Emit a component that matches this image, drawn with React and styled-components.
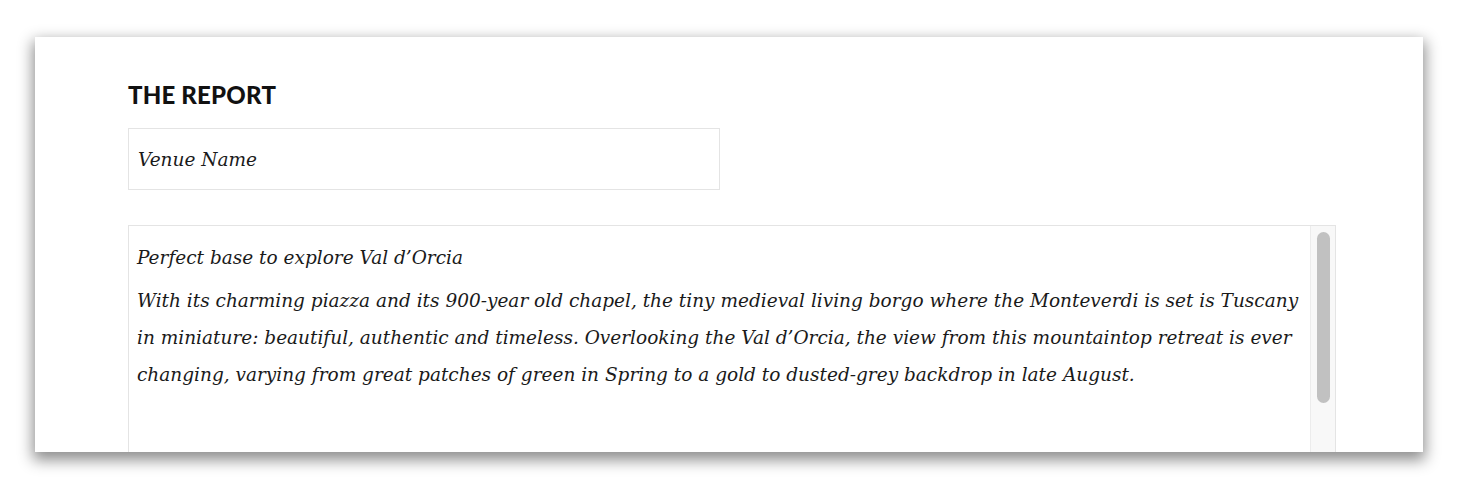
import React from "react";
import styled, { createGlobalStyle } from "styled-components";

const GlobalStyle = createGlobalStyle`
  html, body {
    margin: 0;
    padding: 0;
    background: #fff;
  }
  body {
    font-family: "Lato", "Noto Sans", sans-serif;
  }
`;

const Page = styled.div`
  padding: 37px 37px 0 35px;
  height: 490px;
  box-sizing: border-box;
  overflow: hidden;
`;

const Card = styled.section`
  background: #fff;
  height: 415px;
  box-sizing: border-box;
  padding: 0 87px 0 93px;
  overflow: hidden;
  box-shadow: 0 6px 14px 2px rgba(0, 0, 0, 0.45);
`;

const Heading = styled.h2`
  margin: 0;
  padding-top: 40px;
  font-family: "Lato", sans-serif;
  font-weight: 900;
  font-size: 24px;
  line-height: 36px;
  letter-spacing: 0.2px;
  color: #111;
  text-transform: uppercase;
`;

const VenueInput = styled.input`
  display: block;
  margin-top: 15px;
  width: 592px;
  height: 62px;
  box-sizing: border-box;
  border: 1px solid #e4e4e4;
  padding: 0 9px;
  font-family: "DejaVu Serif", serif;
  font-style: italic;
  font-size: 18.5px;
  color: #222;
  outline: none;

  &::placeholder {
    color: #1a1a1a;
  }
`;

const Editor = styled.div`
  display: flex;
  margin-top: 35px;
  height: 300px;
  box-sizing: border-box;
  border: 1px solid #e4e4e4;
`;

const EditorText = styled.div`
  flex: 1;
  overflow: hidden;
  padding: 16px 6px 0 8px;
  font-family: "DejaVu Serif", serif;
  font-style: italic;
  font-size: 18.5px;
  color: #1a1a1a;
`;

const ScrollTrack = styled.div`
  width: 24px;
  flex-shrink: 0;
  background: #f8f8f8;
  border-left: 1px solid #ececec;
`;

const ScrollThumb = styled.div`
  margin: 6px 5px 0 6px;
  height: 171px;
  background: #c1c1c1;
  border-radius: 7px;
`;

const Title = styled.div`
  line-height: 32px;
  margin-bottom: 8px;
`;

const Body = styled.p`
  margin: 0;
  line-height: 37px;
`;

export default function App() {
  return (
    <>
      <GlobalStyle />
      <Page>
        <Card>
          <Heading>The Report</Heading>
          <VenueInput type="text" placeholder="Venue Name" />
          <Editor>
            <EditorText>
              <Title>Perfect base to explore Val d’Orcia</Title>
              <Body>
                With its charming piazza and its 900-year old chapel, the tiny
                medieval living borgo where the Monteverdi is set is Tuscany in
                miniature: beautiful, authentic and timeless. Overlooking the
                Val d’Orcia, the view from this mountaintop retreat is ever
                changing, varying from great patches of green in Spring to a
                gold to dusted-grey backdrop in late August.
              </Body>
            </EditorText>
            <ScrollTrack>
              <ScrollThumb />
            </ScrollTrack>
          </Editor>
        </Card>
      </Page>
    </>
  );
}
